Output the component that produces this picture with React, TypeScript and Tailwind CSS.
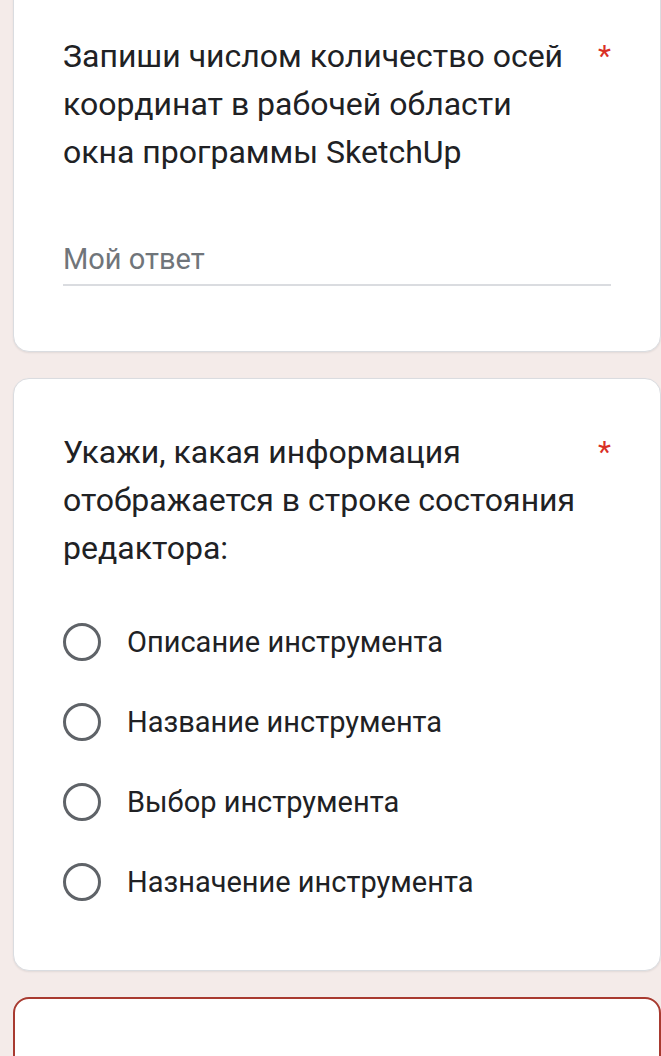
const options = [
  "Описание инструмента",
  "Название инструмента",
  "Выбор инструмента",
  "Назначение инструмента",
];

function Asterisk() {
  return (
    <span className="w-[16px] shrink-0 text-right text-[30px] leading-[48px] text-[#d93025]">*</span>
  );
}

export default function App() {
  return (
    <main
      className="h-[1056px] overflow-hidden bg-[#f4ebe9] pl-[13px] text-[#202124]"
      style={{ fontFamily: "Roboto, 'Noto Sans', sans-serif" }}
    >
      <div className="-mt-[40px] rounded-[16px] border border-[#dadce0] bg-white px-[49px] pb-[65px] pt-[71px] shadow-[0_1px_2px_rgba(0,0,0,0.08)]">
        <div className="flex items-start gap-[15px]">
          <h2 className="min-w-0 flex-1 text-[32px] font-normal leading-[48px]">
            Запиши числом количество осей координат в рабочей области окна программы SketchUp
          </h2>
          <Asterisk />
        </div>
        <div className="mt-[58px] border-b-2 border-[#dadce0] text-[29px] leading-[50px] text-[#70757a]">
          Мой ответ
        </div>
      </div>

      <div className="mt-[26px] rounded-[16px] border border-[#dadce0] bg-white px-[49px] pb-[48px] pt-[49px] shadow-[0_1px_2px_rgba(0,0,0,0.08)]">
        <div className="flex items-start gap-[15px]">
          <h2 className="min-w-0 flex-1 text-[32px] font-normal leading-[48px]">
            Укажи, какая информация отображается в строке состояния редактора:
          </h2>
          <Asterisk />
        </div>
        <div className="mt-[30px] flex flex-col">
          {options.map((label) => (
            <label key={label} className="flex h-[80px] items-center gap-[26px]">
              <span className="h-[38px] w-[38px] shrink-0 rounded-full border-[3.5px] border-[#5f6368]" />
              <span className="text-[29px] leading-[40px]">{label}</span>
            </label>
          ))}
        </div>
      </div>

      <div className="mt-[26px] h-[120px] rounded-[16px] border-2 border-[#a83a30] bg-white" />
    </main>
  );
}
